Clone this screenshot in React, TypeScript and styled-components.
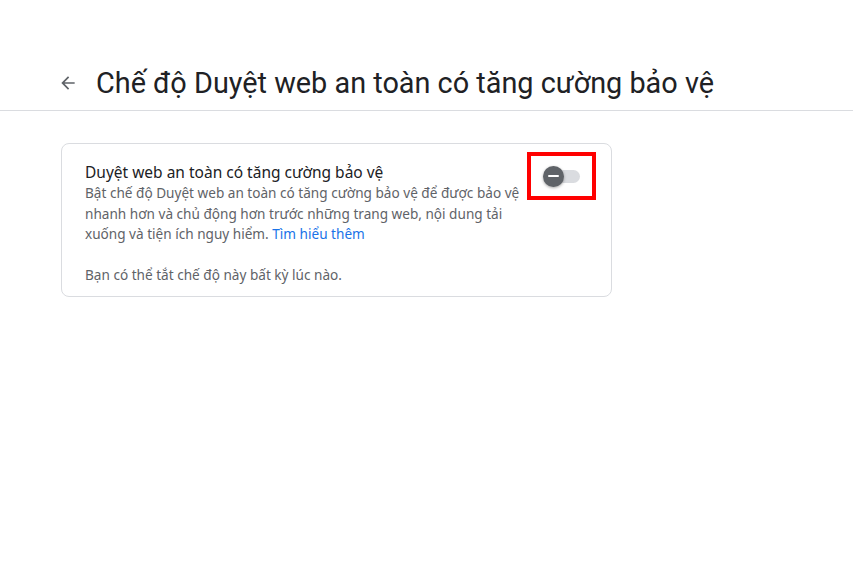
import React, { useState } from 'react'
import styled, { createGlobalStyle } from 'styled-components'

const GlobalStyle = createGlobalStyle`
  html, body {
    margin: 0;
    padding: 0;
    background: #ffffff;
    font-family: 'Noto Sans', Roboto, Arial, sans-serif;
  }
`

function BackArrow() {
  return (
    <svg width="20" height="20" viewBox="0 0 24 24" fill="#5f6368">
      <path d="M20 11H7.83l5.59-5.59L12 4l-8 8 8 8 1.41-1.41L7.83 13H20v-2z" />
    </svg>
  )
}

export default function App() {
  const [enabled, setEnabled] = useState(false)

  return (
    <Page>
      <GlobalStyle />
      <Header>
        <BackButton aria-label="Quay lại">
          <BackArrow />
        </BackButton>
        <Title>Chế độ Duyệt web an toàn có tăng cường bảo vệ</Title>
      </Header>
      <Content>
        <Card>
          <TextColumn>
            <CardTitle>Duyệt web an toàn có tăng cường bảo vệ</CardTitle>
            <Description>
              Bật chế độ Duyệt web an toàn có tăng cường bảo vệ để được bảo vệ nhanh hơn và chủ động hơn
              trước những trang web, nội dung tải xuống và tiện ích nguy hiểm. <Link href="#">Tìm hiểu thêm</Link>
            </Description>
            <Note>Bạn có thể tắt chế độ này bất kỳ lúc nào.</Note>
          </TextColumn>
          <Highlight>
            <Toggle $on={enabled} onClick={() => setEnabled((v) => !v)} aria-pressed={enabled}>
              <Knob $on={enabled} />
            </Toggle>
          </Highlight>
        </Card>
      </Content>
    </Page>
  )
}

const Page = styled.div`
  width: 853px;
  min-height: 568px;
  background: #fff;
`

const Header = styled.div`
  height: 111px;
  border-bottom: 1px solid #dadce0;
  display: flex;
  align-items: flex-end;
  padding: 0 0 9px 58px;
  box-sizing: border-box;
  gap: 18px;
`

const BackButton = styled.button`
  width: 20px;
  height: 20px;
  padding: 0;
  margin-bottom: 8px;
  border: none;
  background: none;
  display: flex;
  align-items: center;
  justify-content: center;
  cursor: pointer;
`

const Title = styled.h1`
  margin: 0;
  font-family: Roboto, Arial, sans-serif;
  font-size: 28.85px;
  font-weight: 400;
  color: #202124;
  line-height: 36px;
`

const Content = styled.div`
  padding: 32px 0 0 61px;
`

const Card = styled.div`
  width: 551px;
  box-sizing: border-box;
  border: 1px solid #dadce0;
  border-radius: 8px;
  padding: 17px 15px 11px 23px;
  display: flex;
  align-items: flex-start;
`

const TextColumn = styled.div`
  width: 442px;
`

const CardTitle = styled.div`
  font-size: 15.5px;
  line-height: 22px;
  color: #202124;
`

const Description = styled.div`
  font-size: 13.6px;
  line-height: 20.5px;
  color: #5f6368;
`

const Link = styled.a`
  color: #1a73e8;
  text-decoration: none;
`

const Note = styled.div`
  margin-top: 20px;
  font-size: 13.6px;
  line-height: 20px;
  color: #5f6368;
`

const Highlight = styled.div`
  margin: -9px 0 0 auto;
  width: 69px;
  height: 48px;
  box-sizing: border-box;
  border: 4px solid #ff0000;
  display: flex;
  align-items: center;
  padding: 0 0 0 15px;
`

const Toggle = styled.button<{ $on: boolean }>`
  position: relative;
  width: 34px;
  height: 13px;
  padding: 0;
  border: none;
  border-radius: 7px;
  background: ${(p) => (p.$on ? '#8ab4f8' : '#dadce0')};
  cursor: pointer;
`

const Knob = styled.span<{ $on: boolean }>`
  position: absolute;
  top: -4px;
  left: ${(p) => (p.$on ? '14px' : '-3px')};
  width: 21px;
  height: 21px;
  border-radius: 50%;
  background: ${(p) => (p.$on ? '#1a73e8' : '#5f6368')};
  box-shadow: 0 1px 3px rgba(0, 0, 0, 0.35);

  &::after {
    content: '';
    position: absolute;
    left: 5px;
    top: 9.5px;
    width: 11px;
    height: 2px;
    border-radius: 1px;
    background: #fff;
  }
`
